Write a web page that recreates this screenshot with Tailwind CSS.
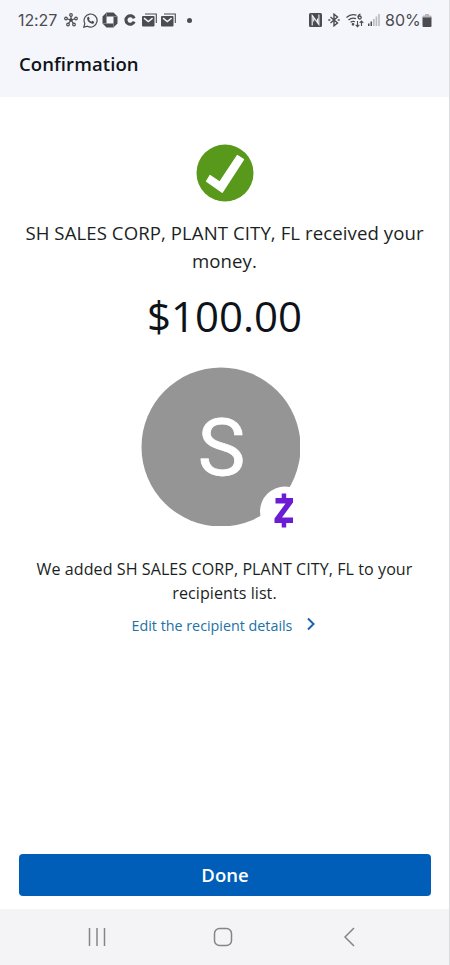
<!DOCTYPE html>
<html lang="en">
<head>
<meta charset="utf-8">
<title>Confirmation</title>
<script src="https://cdn.jsdelivr.net/npm/@tailwindcss/browser@4"></script>
</head>
<body class="w-[450px] h-[965px] overflow-hidden bg-white font-['Open_Sans',sans-serif] text-[#1b1f24]">
<div class="w-[450px] h-[965px] flex flex-col border-r border-[#dcdde1]">
  <header class="h-[97px] shrink-0 bg-[#f4f6fb]">
    <div class="h-10 flex items-center justify-between pl-[18px] pr-[16px] text-[#4b4c50]">
      <div class="flex items-center h-5">
        <span class="w-[46px] font-[Inter,sans-serif] text-[16px] tracking-[-0.1px] leading-5 whitespace-nowrap">12:27</span>
        <svg class="w-[14px] h-[14px] mr-[5px]" viewBox="0 0 14 14" fill="none" stroke="currentColor" stroke-width="1.2"><path d="M7 7V3M7 7L3 5.8M7 7l4-1.2M7 7l-2.4 3.4M7 7l2.4 3.4"/><circle cx="7" cy="2" r="1.3"/><circle cx="2" cy="5.5" r="1.3"/><circle cx="12" cy="5.5" r="1.3"/><circle cx="4" cy="11.5" r="1.3"/><circle cx="10" cy="11.5" r="1.3"/><circle cx="7" cy="7" r="1.2" fill="currentColor"/></svg>
        <svg class="w-[15px] h-[15px] mr-1" viewBox="0 0 15 15"><path d="M.8 14.2l1-3.7a6.5 6.5 0 1 1 2.6 2.7z" fill="none" stroke="currentColor" stroke-width="1.2"/><path d="M4.8 4l1-.3.9 2-.7.9c.6 1.1 1.3 1.7 2.4 2.2l.9-1 1.9.9c.2 1.3-1 2.2-2.1 2C6.5 10.3 4.3 8 4.1 5.8 4 5 4.3 4.4 4.8 4z" fill="currentColor"/></svg>
        <svg class="w-4 h-4 mr-[6px]" viewBox="0 0 16 16"><path d="M4.500.5h7l4 4v7l-4 4h-7l-4-4v-7zM4.500 4.500v7h7v-7z" fill="currentColor" fill-rule="evenodd"/><path d="M4.500.5v4M15.500 4.500h-4M11.500 15.500v-4M.5 11.500h4" stroke="#a5a6aa" stroke-width=".6"/></svg>
        <svg class="w-3 h-3 mr-[6px]" viewBox="0 0 12 12" fill="none" stroke="currentColor" stroke-width="3.1"><path d="M10.2 7.7A4.3 4.3 0 1 1 10.2 4.3"/></svg>
        <svg class="w-[15px] h-[14px] mr-[4px]" viewBox="0 0 15 14"><path d="M3 1h11.3v9" fill="none" stroke="currentColor" stroke-width="1.1"/><rect y="3" width="12.5" height="10.5" rx="1" fill="currentColor"/><path d="M2 5.2l4.3 3.3 4.3-3.3" fill="none" stroke="#f4f6fb" stroke-width="1.5"/></svg>
        <svg class="w-[15px] h-[14px] mr-[11px]" viewBox="0 0 15 14"><path d="M3 1h11.3v9" fill="none" stroke="currentColor" stroke-width="1.1"/><rect y="3" width="12.5" height="10.5" rx="1" fill="currentColor"/><path d="M2 5.2l4.3 3.3 4.3-3.3" fill="none" stroke="#f4f6fb" stroke-width="1.5"/></svg>
        <span class="w-[5px] h-[5px] rounded-full bg-[#4b4c50]"></span>
      </div>
      <div class="flex items-center h-5">
        <svg class="w-[13px] h-[14px] mr-[6px]" viewBox="0 0 13 14"><rect width="13" height="14" rx="1.5" fill="currentColor"/><path d="M3.200 12.500V2.500L8.500 9.500V5.500M9.900 1.500v10L4.700 4.500v4" fill="none" stroke="#f4f6fb" stroke-width="1.1"/></svg>
        <svg class="w-3 h-[14px] mr-[6px]" viewBox="0 0 12 14" fill="none" stroke="currentColor" stroke-width="1.4"><path d="M2.500 4l7 6L6 12.800V1.200L9.500 4l-7 6"/><path d="M.3 7h2M9.700 7h2"/></svg>
        <svg class="w-[18px] h-[15px] mr-1" viewBox="0 0 18 15" fill="none" stroke="currentColor" stroke-width="1.3"><path d="M.5 4.500Q5 .2 10.500 2.200M2.500 7Q6 4 10 5.700M4.500 9.300Q7 7.600 9 8.800"/><circle cx="7" cy="11.3" r=".7" fill="currentColor"/><path d="M14.500 1Q12 1.800 12 4.200"/><circle cx="13.7" cy="4.5" r="1.5"/><path d="M11.500 8v5.500M9.700 11.800l1.800 1.900 1.800-1.900M15.500 13V8M13.700 9.800L15.500 8l1.800 1.800" stroke-width="1.1"/></svg>
        <svg class="w-3 h-3 mr-[5px]" viewBox="0 0 12 12"><path d="M0 9.500h1.500V12H0zM2.500 7.500H4V12H2.500z" fill="currentColor"/><path d="M5 5h1.600v7H5zM7.600 2.500h1.600V12H7.600zM10.200 0h1.600v12h-1.600z" fill="#b9bbc0"/></svg>
        <span class="w-[36px] font-[Inter,sans-serif] text-[16px] leading-5 whitespace-nowrap">80%</span>
        <svg class="w-[10px] h-[13px] ml-[1px] mr-[1px]" viewBox="0 0 10 13"><path d="M3 0h4v1.500h1.500Q9.500 1.500 9.500 2.500V4H.5V2.500q0-1 1-1H3z" fill="#b5b7bc"/><path d="M.5 3.500h9V12q0 1-1 1h-7q-1 0-1-1z" fill="currentColor"/></svg>
      </div>
    </div>
    <h1 class="pl-[19px] pt-[10px] text-[18.5px] tracking-[0.1px] leading-7 font-semibold text-[#0d1319]">Confirmation</h1>
  </header>

  <main class="flex-1 flex flex-col items-center pt-[47px] text-center">
    <svg class="w-[58px] h-[58px] shrink-0" viewBox="0 0 58 58"><circle cx="29" cy="29" r="28.5" fill="#58991c"/><path d="M41.300 11.500L47.600 15.400L26.200 48.300L10.500 37.200L14 31.500L23.700 38z" fill="#fff" stroke="#fff" stroke-width="1.2" stroke-linejoin="round"/></svg>
    <p class="mt-[17px] text-[18.6px] tracking-[0.08px] leading-[28px] whitespace-nowrap">SH SALES CORP, PLANT CITY, FL received your<br>money.</p>
    <p class="mt-[10px] text-[42px] leading-[62px] text-[#0d1319]">$100.00</p>
    <div class="relative mt-[20px] w-[159px] h-[159px] -ml-[8px]">
      <svg class="w-[159px] h-[159px]" viewBox="0 0 159 159"><circle cx="80" cy="80" r="79.5" fill="#959595"/></svg>
      <span class="absolute inset-0 pl-[2px] text-center font-[Roboto,sans-serif] text-[80px] leading-[162px] text-white [-webkit-text-stroke:0.8px_white]">S</span>
      <svg class="absolute left-[117px] top-[118px] w-[52px] h-[52px]" viewBox="0 0 52 52"><circle cx="27" cy="26.5" r="25" fill="#fff"/><path d="M17.500 13h17.500v4.500L24 32.500H35V38H16.500V33.500L27.500 18.500H17.500zM23.700 8.500h4.500V14h-4.500zM23.700 37h4.500v5.500h-4.500z" fill="#6c1cd3"/></svg>
    </div>
    <p class="mt-[31px] text-[16.1px] tracking-[0.05px] leading-[24px] whitespace-nowrap">We added SH SALES CORP, PLANT CITY, FL to your<br>recipients list.</p>
    <a class="mt-[10px] mr-[2px] flex items-center text-[14.3px] leading-[22px] text-[#2271a6] whitespace-nowrap">Edit the recipient details<svg class="w-[8px] h-[14px] ml-[15px] -mt-[5px]" viewBox="0 0 8 14" fill="none" stroke="#1a62b0" stroke-width="2"><path d="M1 1.500L6.500 7L1 12.500"/></svg></a>
  </main>

  <div class="h-[55px] shrink-0 pl-[19px] pr-[18px]"><button class="block w-full h-[42px] rounded-[4px] bg-[#005eb8] text-white text-[18.5px] leading-[42px] font-semibold">Done</button></div>
  <nav class="h-[56px] shrink-0 bg-[#f4f4f7] flex items-center pl-[87px]">
    <svg class="w-[20px] h-[20px]" viewBox="0 0 20 20" stroke="#858589" stroke-width="1.5"><path d="M2.500 1v18M10 1v18M17.500 1v18"/></svg>
    <svg class="w-[20px] h-[20px] ml-[106px]" viewBox="0 0 20 20" fill="none" stroke="#858589" stroke-width="1.5"><rect x="1.5" y="1.5" width="17" height="17" rx="5"/></svg>
    <svg class="w-[12px] h-[20px] ml-[110px]" viewBox="0 0 12 20" fill="none" stroke="#858589" stroke-width="1.5"><path d="M11 1L2 10l9 9"/></svg>
  </nav>
</div>
</body>
</html>
